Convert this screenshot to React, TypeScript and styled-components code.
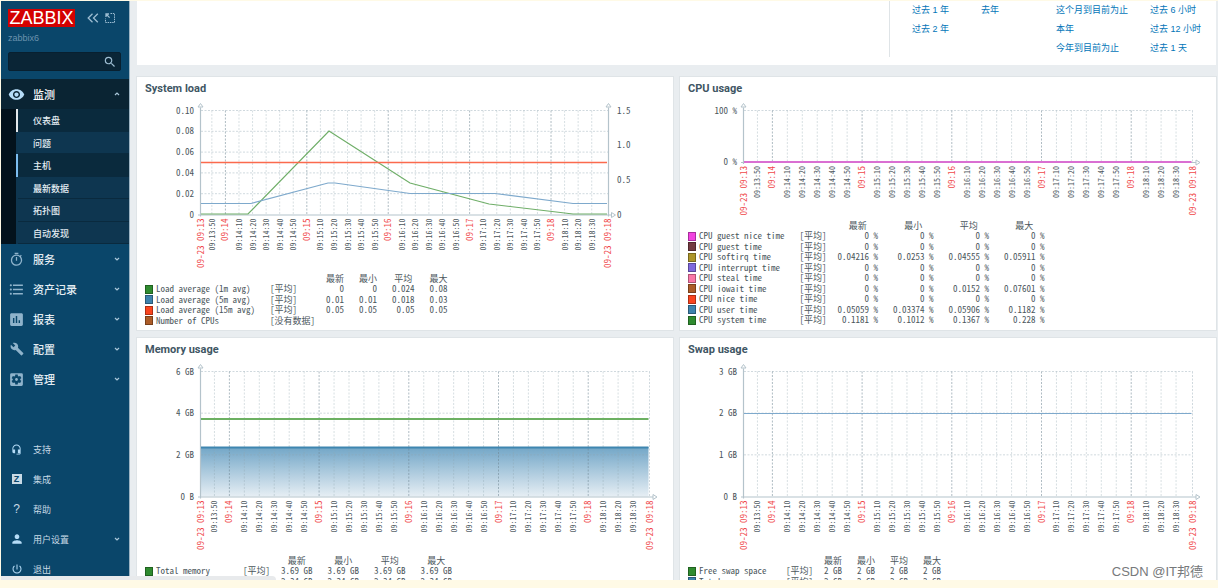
import React from "react";
import styled, { createGlobalStyle, css } from "styled-components";
import {
  MdAssessment,
  MdBuild,
  MdFormatListBulleted,
  MdHeadsetMic,
  MdOutlineTimer,
  MdPerson,
  MdPowerSettingsNew,
  MdSearch,
  MdSettingsApplications,
  MdVisibility,
} from "react-icons/md";

const sans = `"Liberation Sans", "Noto Sans CJK SC", sans-serif`;
const mono = `"Noto Sans Mono CJK SC", "Noto Sans CJK SC", monospace`;

const GlobalStyle = createGlobalStyle`
  * { box-sizing: border-box; }
  body {
    margin: 0;
    background: #fffae6;
    font-family: ${sans};
    color: #1f2c33;
  }
  a { color: inherit; text-decoration: none; }
`;

/* ---------- page frame ---------- */

const Page = styled.div`
  height: 100vh;
  padding: 1px 0 8px 1px;
`;

const Frame = styled.div`
  position: relative;
  display: flex;
  height: 100%;
  overflow: hidden;
  background: #e9edf0;
`;

const StatusBar = styled.div`
  position: absolute;
  left: 0;
  bottom: 0;
  width: 275px;
  height: 4px;
  background: #e8eaec;
  border-top-right-radius: 4px;
`;

const Watermark = styled.div`
  position: absolute;
  right: 15px;
  bottom: 0;
  font-size: 13px;
  line-height: 16px;
  color: #76797b;
`;

/* ---------- sidebar ---------- */

const Sidebar = styled.aside`
  flex: 0 0 129px;
  min-width: 0;
  background: #0a466a;
  border-right: 1px solid #9db4c3;
  color: #c8dae6;
`;

const Brand = styled.div`
  display: flex;
  align-items: center;
  gap: 6px;
  padding: 8px 0 0 7px;
`;

const Logo = styled.a`
  width: 67px;
  height: 18px;
  margin-right: 6px;
  background: #d40000;
  color: #fff;
  font-size: 18px;
  line-height: 19px;
  text-align: center;
`;

const IconButton = styled.button`
  display: flex;
  flex: none;
  padding: 0;
  border: 0;
  background: none;
  color: #9dbdd2;
`;

const ServerName = styled.div`
  padding: 4px 7px 0;
  font-size: 9px;
  line-height: 14px;
  color: #6c93ae;
`;

const SearchForm = styled.form`
  display: flex;
  align-items: center;
  height: 19px;
  margin: 7px 8px 8px 7px;
  padding-right: 3px;
  background: #0a2536;
  border: 1px solid #082030;
  border-radius: 2px;
`;

const SearchInput = styled.input`
  flex: 1;
  width: 100%;
  min-width: 0;
  padding: 0 4px;
  border: 0;
  outline: 0;
  background: none;
  color: #fff;
  font: 9px ${sans};
`;

const MenuItem = styled.a<{ $active?: boolean; $small?: boolean }>`
  display: flex;
  align-items: center;
  height: 30px;
  padding: 0 9px 0 7px;
  font-size: ${(p) => (p.$small ? 9 : 11)}px;
  font-weight: ${(p) => (p.$small ? 400 : 500)};
  color: ${(p) => (p.$small ? "#c8dae6" : "#e4edf3")};
  ${(p) =>
    p.$active &&
    css`
      background: #0a2433;
      color: #fff;
    `}
`;

const IconSlot = styled.span<{ $bright?: boolean }>`
  display: flex;
  justify-content: center;
  width: 17px;
  margin-right: 8px;
  color: ${(p) => (p.$bright ? "#b5dcf7" : "#8fb3cb")};
`;

const Label = styled.span`
  flex: 1;
`;

const SubMenu = styled.div`
  padding-left: 15px;
  background: #03121c;
`;

const SubItem = styled.a<{ $state?: "selected" | "hover" }>`
  display: flex;
  align-items: center;
  height: 22px;
  padding-left: 15px;
  border-left: 2px solid
    ${(p) => (p.$state === "selected" ? "#e3e8eb" : p.$state === "hover" ? "#7cbdf0" : "#0e3650")};
  background: ${(p) => (p.$state ? "#0a2a3d" : "#0e3650")};
  box-shadow: inset 0 -1px #0a2a3e;
  font-size: 9px;
  font-weight: 500;
  color: #e4edf3;
  &:nth-child(odd) {
    height: 23px;
  }
`;

const FooterMenu = styled.nav`
  margin-top: 40px;
`;

const Badge = styled.span`
  width: 10px;
  height: 10px;
  background: #c8dae6;
  color: #0a466a;
  font-size: 9px;
  font-weight: 700;
  line-height: 10px;
  text-align: center;
`;

const Question = styled.span`
  font-size: 12px;
  color: #c8dae6;
`;

function Chevron({ up }: { up?: boolean }) {
  return (
    <svg width="6" height="6" viewBox="0 0 6 6" fill="none" stroke="#a9c6d9" strokeWidth="1.2">
      <path d={up ? "M1 4 3 2 5 4" : "M1 2 3 4 5 2"} />
    </svg>
  );
}

const mainMenu = [
  { label: "服务", icon: <MdOutlineTimer size={15} /> },
  { label: "资产记录", icon: <MdFormatListBulleted size={17} /> },
  { label: "报表", icon: <MdAssessment size={17} /> },
  { label: "配置", icon: <MdBuild size={14} /> },
  { label: "管理", icon: <MdSettingsApplications size={17} /> },
];

const footerMenu = [
  { label: "支持", icon: <MdHeadsetMic size={11} /> },
  { label: "集成", icon: <Badge>Z</Badge> },
  { label: "帮助", icon: <Question>?</Question> },
  { label: "用户设置", icon: <MdPerson size={14} />, expandable: true },
  { label: "退出", icon: <MdPowerSettingsNew size={12} /> },
];

const subMenu: { label: string; state?: "selected" | "hover" }[] = [
  { label: "仪表盘", state: "selected" },
  { label: "问题" },
  { label: "主机", state: "hover" },
  { label: "最新数据" },
  { label: "拓扑图" },
  { label: "自动发现" },
];

function SideNav() {
  return (
    <Sidebar>
      <Brand>
        <Logo href="#home">ZABBIX</Logo>
        <IconButton aria-label="收起侧栏">
          <svg width="12" height="10" viewBox="0 0 12 10" fill="none" stroke="currentColor" strokeWidth="1.3">
            <path d="M5.5 .8 1.2 5l4.3 4.2M10.8 .8 6.5 5l4.3 4.2" />
          </svg>
        </IconButton>
        <IconButton aria-label="隐藏侧栏">
          <svg width="10" height="10" viewBox="0 0 10 10" fill="none" stroke="currentColor">
            <path d="M5.5 .5h4v9h-9v-4" strokeDasharray="1.5 .8" />
            <path d="M1 4V1h3M1 1l3.6 3.6" strokeWidth="1.3" />
          </svg>
        </IconButton>
      </Brand>
      <ServerName>zabbix6</ServerName>
      <SearchForm role="search">
        <SearchInput type="text" aria-label="搜索" />
        <IconButton type="button" aria-label="执行搜索">
          <MdSearch size={14} />
        </IconButton>
      </SearchForm>
      <nav>
        <MenuItem href="#monitoring" $active>
          <IconSlot $bright>
            <MdVisibility size={17} />
          </IconSlot>
          <Label>监测</Label>
          <Chevron up />
        </MenuItem>
        <SubMenu>
          {subMenu.map((item) => (
            <SubItem key={item.label} href="#view" $state={item.state}>
              {item.label}
            </SubItem>
          ))}
        </SubMenu>
        {mainMenu.map((item) => (
          <MenuItem key={item.label} href="#section">
            <IconSlot>{item.icon}</IconSlot>
            <Label>{item.label}</Label>
            <Chevron />
          </MenuItem>
        ))}
      </nav>
      <FooterMenu>
        {footerMenu.map((item) => (
          <MenuItem key={item.label} href="#section" $small>
            <IconSlot $bright>{item.icon}</IconSlot>
            <Label>{item.label}</Label>
            {item.expandable && <Chevron />}
          </MenuItem>
        ))}
      </FooterMenu>
    </Sidebar>
  );
}

/* ---------- main column ---------- */

const Main = styled.main`
  flex: 1;
  min-width: 0;
  padding: 0 2px 0 7px;
`;

const FilterPanel = styled.section`
  display: flex;
  justify-content: flex-end;
  height: 64px;
  margin-bottom: 12px;
  background: #fff;
`;

const RangeGrid = styled.div`
  display: grid;
  grid-template-columns: 69px 75px 94px 66px;
  grid-auto-rows: 19px;
  align-content: start;
  height: 56px;
  padding-left: 22px;
  border-left: 1px solid #dfe4e7;
`;

const RangeLink = styled.a<{ $col: number; $row: number }>`
  grid-column: ${(p) => p.$col};
  grid-row: ${(p) => p.$row};
  font-size: 9px;
  line-height: 18px;
  white-space: nowrap;
  color: #0275b8;
`;

const ranges: [string, number, number][] = [
  ["过去 1 年", 1, 1],
  ["过去 2 年", 1, 2],
  ["去年", 2, 1],
  ["这个月到目前为止", 3, 1],
  ["本年", 3, 2],
  ["今年到目前为止", 3, 3],
  ["过去 6 小时", 4, 1],
  ["过去 12 小时", 4, 2],
  ["过去 1 天", 4, 3],
];

const Widgets = styled.div`
  display: grid;
  grid-template-columns: 1fr 1fr;
  gap: 8px 7px;
`;

const Card = styled.section`
  min-width: 0;
  padding-bottom: 4px;
  background: #fff;
  box-shadow: 0 0 0 1px #dfe4e7;
`;

const CardTitle = styled.h2`
  margin: 0;
  padding: 1px 8px 0;
  font: 700 11px/21px Roboto, ${sans};
  color: #3f5664;
`;

const ChartSvg = styled.svg`
  display: block;
  width: 100%;
  font-family: ${mono};
`;

const Legend = styled.table`
  margin-left: 8px;
  border-collapse: collapse;
  font: 9px/10px ${mono};
  color: #4b565c;
  white-space: pre;
  tbody tr:nth-child(odd) { height: 10px; }
  tbody tr:nth-child(even) { height: 11px; }
`;

const HeadCell = styled.th`
  height: 11px;
  padding: 0 15px 0 0;
  font-weight: 400;
  text-align: center;
`;

const Cell = styled.td<{ $gap: number; $left?: boolean }>`
  padding: 0 ${(p) => p.$gap}px 0 0;
  text-align: ${(p) => (p.$left ? "left" : "right")};
`;

const Swatch = styled.span<{ $color: string }>`
  display: block;
  width: 8px;
  height: 9px;
  background: ${(p) => p.$color};
  border: 1px solid rgba(0, 0, 0, 0.3);
`;

/* ---------- charts ---------- */

type Series = { color: string; width: number; points: [number, number][] };
type LegendRow = { color: string; name: string; fn: string; values: string[] };
type ChartProps = {
  title: string;
  bottom: number;
  height: number;
  right: number;
  firstMinute: number;
  yLabels: string[];
  gridRows: number;
  rightLabels?: string[];
  series: Series[];
  area?: { top: number; line: string };
  rows: LegendRow[];
};

const LEFT = 64;
const TOP = 11.5;

const pad = (n: number) => String(n).padStart(2, "0");

function Chart(p: ChartProps) {
  const perSecond = (p.right - LEFT) / 300;
  const ticks: { x: number; label: string; major: boolean }[] = [];
  for (let s = -10; s <= 270; s += 10) {
    const total = 14 * 60 + s;
    const major = s % 60 === 0;
    const minute = `09:${pad(Math.floor(total / 60))}`;
    ticks.push({
      x: LEFT + (s + p.firstMinute) * perSecond,
      label: major ? minute : `${minute}:${pad(total % 60)}`,
      major,
    });
  }
  const rowY = (i: number, count: number) => p.bottom - ((p.bottom - TOP) * i) / count;
  const labelY = p.bottom + 4;

  return (
    <Card>
      <CardTitle>{p.title}</CardTitle>
      <ChartSvg viewBox={`0 0 536 ${p.height}`} role="img" aria-label={p.title}>
        {p.area && (
          <>
            <defs>
              <linearGradient id="areaFill" x1="0" y1="0" x2="0" y2="1">
                <stop offset="0" stopColor="#72a6c7" />
                <stop offset="1" stopColor="#e6eef4" />
              </linearGradient>
            </defs>
            <rect x={LEFT} y={p.area.top} width={p.right - LEFT - 1} height={p.bottom - p.area.top} fill="url(#areaFill)" />
          </>
        )}
        <g strokeDasharray="2 1.5" fill="none">
          {Array.from({ length: p.gridRows }, (_, i) => (
            <path key={i} d={`M${LEFT} ${rowY(i + 1, p.gridRows)}H${p.right}`} stroke="#8fa5b0" strokeOpacity=".42" />
          ))}
          {ticks.map((t) => (
            <path
              key={t.label}
              d={`M${t.x} ${TOP}V${p.bottom}`}
              stroke={t.major ? "#6d8591" : "#8fa5b0"}
              strokeOpacity={t.major ? 0.55 : 0.36}
            />
          ))}
          {!p.rightLabels && <path d={`M${p.right} ${TOP}V${p.bottom}`} stroke="#8fa5b0" strokeOpacity=".42" />}
        </g>
        <g stroke="#b4c3cb" fill="#fff">
          <path d={`M${LEFT - 0.5} ${TOP - 3}V${p.bottom + 2}`} strokeWidth="1.2" />
          <path d={`M${LEFT - 3} ${p.bottom + 0.5}H${p.right + 4}`} strokeWidth="1.2" />
          <path d={`M${LEFT - 3} ${TOP - 3.5}h5l-2.5-3.5z`} />
          <path d={`M${p.right + 3.5} ${p.bottom - 2}v5l4-2.5z`} />
          {p.rightLabels && (
            <>
              <path d={`M${p.right + 0.5} ${TOP - 3}V${p.bottom + 2}`} strokeWidth="1.2" />
              <path d={`M${p.right - 2} ${TOP - 3.5}h5l-2.5-3.5z`} />
            </>
          )}
        </g>
        {p.area && <path d={`M${LEFT} ${p.area.top + 0.5}H${p.right - 1}`} stroke={p.area.line} strokeWidth="2" />}
        {p.series.map((s, i) => (
          <polyline key={i} points={s.points.map((pt) => pt.join(",")).join(" ")} fill="none" stroke={s.color} strokeWidth={s.width} />
        ))}
        <g fontSize="9" fill="#4b565c">
          {p.yLabels.map((label, i) => (
            <text key={label} x="57" y={rowY(i, p.yLabels.length - 1) + 3} textAnchor="end" xmlSpace="preserve">
              {label}
            </text>
          ))}
          {p.rightLabels?.map((label, i) => (
            <text key={label} x={p.right + 9} y={rowY(i, p.rightLabels!.length - 1) + 3}>
              {label}
            </text>
          ))}
        </g>
        <g textAnchor="end">
          {ticks.map((t) => (
            <text
              key={t.label}
              transform={`translate(${t.x + 3} ${labelY}) rotate(-90)`}
              fontSize={t.major ? 9 : 8}
              fill={t.major ? "#f0484a" : "#4b565c"}
            >
              {t.label}
            </text>
          ))}
          <text transform={`translate(${LEFT + 3} ${labelY}) rotate(-90)`} fontSize="9" fill="#f0484a">
            09-23 09:13
          </text>
          <text transform={`translate(${p.right + 3} ${labelY}) rotate(-90)`} fontSize="9" fill="#f0484a">
            09-23 09:18
          </text>
        </g>
      </ChartSvg>
      <Legend>
        <thead>
          <tr>
            <td colSpan={3} />
            {["最新", "最小", "平均", "最大"].map((h) => (
              <HeadCell key={h} scope="col">
                {h}
              </HeadCell>
            ))}
          </tr>
        </thead>
        <tbody>
          {p.rows.map((r) => (
            <tr key={r.name}>
              <Cell $gap={3}>
                <Swatch $color={r.color} />
              </Cell>
              <Cell $gap={15} $left>
                {r.name}
              </Cell>
              <Cell $gap={11} $left>
                {r.fn}
              </Cell>
              {r.values.map((v, i) => (
                <Cell key={i} $gap={15}>
                  {v}
                </Cell>
              ))}
            </tr>
          ))}
        </tbody>
      </Legend>
    </Card>
  );
}

const C = {
  green: "#2f8b2f",
  blue: "#3d82ad",
  red: "#f9441e",
  brown: "#ac5c28",
  magenta: "#f143e0",
  maroon: "#733a41",
  olive: "#ad952a",
  violet: "#7f68dc",
  pink: "#f978a8",
};

const avg = "[平均]";
const zero = ["0 %", "0 %", "0 %", "0 %"];

export default function App() {
  return (
    <>
      <GlobalStyle />
      <Page>
        <Frame>
          <SideNav />
          <Main>
            <FilterPanel>
              <RangeGrid>
                {ranges.map(([label, col, row]) => (
                  <RangeLink key={label} href="#range" $col={col} $row={row}>
                    {label}
                  </RangeLink>
                ))}
              </RangeGrid>
            </FilterPanel>
            <Widgets>
              <Chart
                title="System load"
                height={174}
                bottom={115.5}
                right={471}
                firstMinute={18}
                yLabels={["0", "0.02", "0.04", "0.06", "0.08", "0.10"]}
                gridRows={5}
                rightLabels={["0", "0.5", "1.0", "1.5"]}
                series={[
                  { color: "#6fae68", width: 1.2, points: [[64, 115], [111, 115], [192, 32], [273, 84], [352, 105], [436, 115], [470, 115]] },
                  { color: "#7ea9cc", width: 1.2, points: [[64, 104.5], [114, 104.5], [191, 84], [198, 84], [273, 94.5], [358, 94.5], [436, 104.5], [470, 104.5]] },
                  { color: "#fb6a4d", width: 1.5, points: [[64, 63.5], [470, 63.5]] },
                ]}
                rows={[
                  { color: C.green, name: "Load average (1m avg)", fn: avg, values: ["0", "0", "0.024", "0.08"] },
                  { color: C.blue, name: "Load average (5m avg)", fn: avg, values: ["0.01", "0.01", "0.018", "0.03"] },
                  { color: C.red, name: "Load average (15m avg)", fn: avg, values: ["0.05", "0.05", "0.05", "0.05"] },
                  { color: C.brown, name: "Number of CPUs", fn: "[没有数据]", values: [] },
                ]}
              />
              <Chart
                title="CPU usage"
                height={121}
                bottom={63}
                right={512.5}
                firstMinute={19}
                yLabels={["0 %", "100 %"]}
                gridRows={1}
                series={[{ color: "#da6fd2", width: 2, points: [[64, 63], [511.5, 63]] }]}
                rows={[
                  { color: C.magenta, name: "CPU guest nice time", fn: avg, values: zero },
                  { color: C.maroon, name: "CPU guest time", fn: avg, values: zero },
                  { color: C.olive, name: "CPU softirq time", fn: avg, values: ["0.04216 %", "0.0253 %", "0.04555 %", "0.05911 %"] },
                  { color: C.violet, name: "CPU interrupt time", fn: avg, values: zero },
                  { color: C.pink, name: "CPU steal time", fn: avg, values: zero },
                  { color: C.brown, name: "CPU iowait time", fn: avg, values: ["0 %", "0 %", "0.0152 %", "0.07601 %"] },
                  { color: C.red, name: "CPU nice time", fn: avg, values: zero },
                  { color: C.blue, name: "CPU user time", fn: avg, values: ["0.05059 %", "0.03374 %", "0.05906 %", "0.1182 %"] },
                  { color: C.green, name: "CPU system time", fn: avg, values: ["0.1181 %", "0.1012 %", "0.1367 %", "0.228 %"] },
                ]}
              />
              <Chart
                title="Memory usage"
                height={195}
                bottom={136.5}
                right={512.5}
                firstMinute={19}
                yLabels={["0 B", "2 GB", "4 GB", "6 GB"]}
                gridRows={3}
                area={{ top: 87, line: "#3f86b0" }}
                series={[{ color: "#6cb062", width: 2, points: [[64, 59], [511.5, 59]] }]}
                rows={[
                  { color: C.green, name: "Total memory", fn: avg, values: ["3.69 GB", "3.69 GB", "3.69 GB", "3.69 GB"] },
                  { color: C.blue, name: "Available memory", fn: avg, values: ["2.34 GB", "2.34 GB", "2.34 GB", "2.34 GB"] },
                ]}
              />
              <Chart
                title="Swap usage"
                height={195}
                bottom={136.5}
                right={512.5}
                firstMinute={19}
                yLabels={["0 B", "1 GB", "2 GB", "3 GB"]}
                gridRows={3}
                series={[{ color: "#7ea9cc", width: 1.2, points: [[64, 53.5], [511.5, 53.5]] }]}
                rows={[
                  { color: C.green, name: "Free swap space", fn: avg, values: ["2 GB", "2 GB", "2 GB", "2 GB"] },
                  { color: C.blue, name: "Total swap space", fn: avg, values: ["2 GB", "2 GB", "2 GB", "2 GB"] },
                ]}
              />
            </Widgets>
          </Main>
          <StatusBar />
          <Watermark>CSDN @IT邦德</Watermark>
        </Frame>
      </Page>
    </>
  );
}
